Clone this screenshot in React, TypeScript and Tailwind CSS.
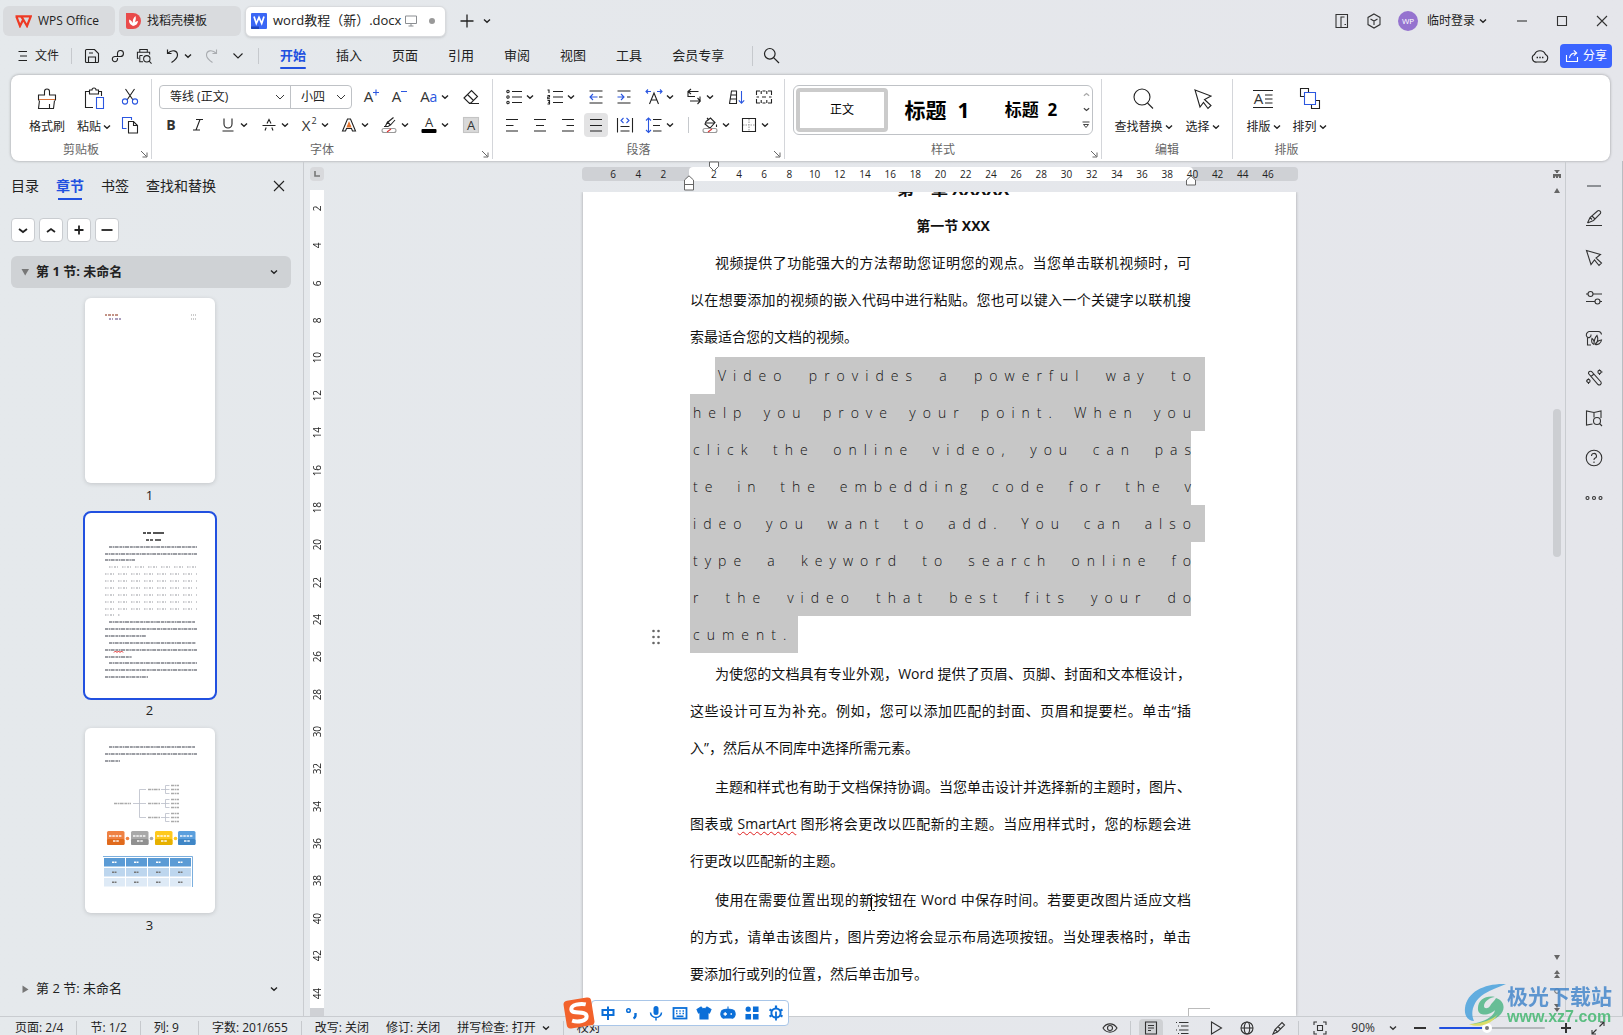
import React from "react";

type Kids = { children?: React.ReactNode };

const BLUE = "#2b57e0";

function Ic({ children, s = 18, w = 1.1, box = 18 }: Kids & { s?: number; w?: number; box?: number }) {
  return (
    <svg width={s} height={s} viewBox={`0 0 ${box} ${box}`} fill="none" stroke="currentColor" strokeWidth={w} className="shrink-0 overflow-visible" aria-hidden="true">
      {children}
    </svg>
  );
}

function Chev({ s = 8 }: { s?: number }) {
  return (
    <svg width={s} height={s} viewBox="0 0 8 8" fill="none" stroke="currentColor" strokeWidth={1.4} className="shrink-0" aria-hidden="true">
      <path d="M1 2.5 L4 5.2 L7 2.5" />
    </svg>
  );
}

function Glyph({ children, size = 15, x = 9, y = 14, fill = "#333", bold = false }: Kids & { size?: number; x?: number; y?: number; fill?: string; bold?: boolean }) {
  return (
    <text x={x} y={y} textAnchor="middle" fontSize={size} fill={fill} stroke="none" fontFamily="Open Sans, sans-serif" fontWeight={bold ? 700 : 400}>
      {children}
    </text>
  );
}

function Tool({ label, cls, chev, children }: Kids & { label: string; cls: string; chev?: boolean }) {
  return (
    <button aria-label={label} className={`flex h-6 shrink-0 items-center gap-[3px] ${cls}`}>
      {children}
      {chev && <Chev />}
    </button>
  );
}

function BigTool({ label, chev, children }: Kids & { label: string; chev?: boolean }) {
  return (
    <button className="flex flex-col items-center gap-1">
      <span className="flex h-7 items-center">{children}</span>
      <span className="flex h-5 items-center gap-0.5 text-xs leading-5">
        {label}
        {chev && <Chev />}
      </span>
    </button>
  );
}

function Launcher() {
  return (
    <button aria-label="更多设置" className="absolute right-0.5 bottom-0 text-[#666]">
      <svg width="9" height="9" viewBox="0 0 9 9" fill="none" stroke="currentColor">
        <path d="M1 1 L6.5 6.5 M7 2.5 V7 H2.5" />
      </svg>
    </button>
  );
}

function Group({ name, cls, launcher, last, children }: Kids & { name: string; cls: string; launcher?: boolean; last?: boolean }) {
  return (
    <section className={`relative mt-1 mb-0.5 flex shrink-0 flex-col ${last ? "" : "border-r border-[#d4d6da]"} ${cls}`}>
      <div className="h-[63px] pt-1.5">{children}</div>
      <div className="text-center text-xs leading-4 text-[#666]">{name}</div>
      {launcher && <Launcher />}
    </section>
  );
}

function TitleBar() {
  return (
    <header className="flex h-[42px] shrink-0 items-center justify-between pr-3.5 pl-[3px] text-xs">
      <div className="flex items-center">
        <button className="flex h-[30px] w-[112px] items-center gap-1.5 rounded-md bg-[#d9dbde] pl-3">
          <svg width="17" height="13" viewBox="0 0 17 13" fill="none" stroke="#ee3a24" strokeWidth="2.2">
            <path d="M0.5 1.3 H15.8 L12 11 L8.2 4.5 L5 11 L1.4 1.6 M6 1.3 L8.5 5" />
          </svg>
          WPS Office
        </button>
        <button className="ml-1 flex h-[30px] w-[122px] items-center gap-1.5 rounded-md bg-[#d9dbde] pl-[7px]">
          <svg width="15" height="16" viewBox="0 0 15 16">
            <path d="M0 0 H7 A8 8 0 0 1 7 16 H2 A2 2 0 0 1 0 14 Z" fill="#e94b4b" />
            <path d="M7 13 C2.5 10.5 3 8 3.3 6.5 C5 7.3 6 8.6 7 10 C6.2 7 7.5 5 9.5 3 C10.3 6 9.6 8 8.6 9.6 C9.6 8.4 10.5 8.2 12 8 C11.5 11.5 9.6 12.5 7 13 Z" fill="#fff" />
          </svg>
          找稻壳模板
        </button>
        <div className="ml-1 flex h-[31px] w-[201px] items-center rounded-md border border-[#d8dadd] bg-white pl-[5px] text-[13px] shadow-sm">
          <svg width="16" height="16" viewBox="0 0 16 16">
            <rect width="16" height="16" rx="1" fill="#3a66f5" />
            <path d="M0 13.5 H8 V16 H1 A1 1 0 0 1 0 15 Z" fill="#1d43bd" />
            <path d="M3 3.6 L5.3 10.5 L8 4.4 L10.7 10.5 L13 3.6" stroke="#fff" strokeWidth="1.7" fill="none" />
          </svg>
          <span className="ml-1.5 whitespace-nowrap">word教程（新）.docx</span>
          <svg width="12" height="12" viewBox="0 0 12 12" fill="none" stroke="#8b8e92" className="ml-1">
            <path d="M0.5 1 H11.5 V8.5 H0.5 Z M6 8.5 V11 M3.5 11 H8.5" />
          </svg>
          <span className="ml-3 size-1.5 rounded-full bg-[#999]" />
        </div>
        <button aria-label="新建" className="ml-[13px]">
          <Ic s={16} box={16} w={1.3}><path d="M8 1.5 V14.5 M1.5 8 H14.5" /></Ic>
        </button>
        <button aria-label="标签列表" className="ml-2"><Chev /></button>
      </div>
      <div className="flex items-center text-[#333]">
        <button aria-label="双窗口"><Ic s={16} box={16}><path d="M6.5 14.5 H2 V1.5 H13.5 V14.5 H7 V4 H10.5 M10.5 11.5 H12" /></Ic></button>
        <button aria-label="应用" className="ml-4"><Ic s={16} box={16}><path d="M8 1 L14 4.4 V11.6 L8 15 L2 11.6 V4.4 Z M4.5 6 L8 8 L11.5 6 M8 8 V12" /></Ic></button>
        <span className="ml-4 flex size-5 items-center justify-center rounded-full bg-[#9573cf] text-[8px] text-white">WP</span>
        <button className="ml-[9px] flex items-center gap-1 text-[#222]">临时登录<Chev /></button>
        <button aria-label="最小化" className="ml-7"><Ic s={14} box={14}><path d="M2 7 H12" /></Ic></button>
        <button aria-label="最大化" className="ml-[26px]"><Ic s={14} box={14}><path d="M2.5 2.5 H11.5 V11.5 H2.5 Z" /></Ic></button>
        <button aria-label="关闭" className="ml-[26px]"><Ic s={14} box={14}><path d="M2 2 L12 12 M12 2 L2 12" /></Ic></button>
      </div>
    </header>
  );
}

function Sep({ cls }: { cls: string }) {
  return <span className={`w-px shrink-0 bg-[#c6c9cd] ${cls}`} />;
}

const menus = ["开始", "插入", "页面", "引用", "审阅", "视图", "工具", "会员专享"];

function MenuBar() {
  return (
    <nav className="flex h-[33px] shrink-0 items-center pr-[11px] pb-1.5 pl-[17px] text-[13px]">
      <button className="flex items-center gap-1.5">
        <Ic s={12} box={12}><path d="M1.5 1.5 H10 M3 6 H10 M1.5 10.5 H10" /></Ic>
        <span className="text-xs">文件</span>
      </button>
      <Sep cls="ml-3 h-4" />
      <button aria-label="保存" className="ml-3"><Ic s={16} box={16}><path d="M4 14.5 H2.5 A1 1 0 0 1 1.5 13.5 V2.5 A1 1 0 0 1 2.5 1.5 H10.5 L14.5 5.5 V13.5 A1 1 0 0 1 13.5 14.5 H4.5 V9 H11.5 V14 M5 5 H9" /></Ic></button>
      <button aria-label="输出" className="ml-2.5"><Ic s={16} box={16}><path d="M7.5 8.5 V5 A3 3 0 1 1 10.500 8.500 H5 A2.600 2.600 0 1 0 7.500 11 V10" /></Ic></button>
      <button aria-label="打印预览" className="ml-2.5"><Ic s={16} box={17}><path d="M3 11 H1.5 V4.5 H14.5 V7 M4 4.5 V1.5 H12 V4.5 M4 8 V14.5 H7.5 M4 8 H7 M14 14 L16.5 16.5" /><circle cx="11.5" cy="11.5" r="3.4" /></Ic></button>
      <button aria-label="撤销" className="ml-3 flex items-center gap-1"><Ic s={16} box={16} w={1.2}><path d="M3.5 1.5 V5.5 H7.5 M3.5 5.5 C8 1 13.5 2.5 13.5 7 C13.5 10.5 10.5 12.5 7.5 14.5" /></Ic><Chev /></button>
      <span className="ml-3 text-[#a9acb0]"><Ic s={16} box={16}><path d="M12.5 1.5 V5.5 H8.5 M12.5 5.5 C8 1 2.5 2.5 2.5 7 C2.5 10.5 5.5 12.5 8.5 14.5" /></Ic></span>
      <button aria-label="自定义快速访问" className="ml-3"><Ic s={12} box={12}><path d="M1.5 3.5 L6 8 L10.5 3.5" /></Ic></button>
      <Sep cls="ml-3.5 h-4" />
      <div className="ml-[21px] flex gap-[30px]">
        {menus.map((m, i) => (
          <button key={m} className={i === 0 ? "relative font-bold text-[#2150e0] after:absolute after:inset-x-0 after:-bottom-1 after:h-0.5 after:rounded after:bg-[#2150e0]" : "relative"}>
            {m}
          </button>
        ))}
      </div>
      <Sep cls="ml-7 h-5" />
      <button aria-label="搜索" className="ml-2.5"><Ic s={17} box={17} w={1.2}><circle cx="6.8" cy="6.8" r="5.3" /><path d="M10.6 10.6 L16 16" /></Ic></button>
      <button aria-label="评论" className="ml-auto"><Ic s={16} box={16}><path d="M5 14 A4 4 0 0 1 2.5 6.5 C4.5 1.5 11.5 1.5 13.5 6.5 A4 4 0 0 1 11 14 Z" /><path d="M4.6 9.5 H6 M7.3 9.5 H8.7 M10 9.5 H11.4" strokeWidth={1.6} /></Ic></button>
      <button className="ml-3 flex h-6 w-[52px] items-center justify-center gap-1 rounded bg-[#3b64ff] text-xs text-white">
        <Ic s={14} box={14}><path d="M1.5 6 V12.5 H12.5 V8 M4.5 9 C5 5.5 7 4 11 4 M8.8 1.3 L11.7 4 L8.8 6.7" /></Ic>
        分享
      </button>
    </nav>
  );
}

function SelectArrow() {
  return (
    <span className="pointer-events-none absolute right-[5px]"><Ic s={10} box={10} w={0.9}><path d="M1 3 L5 7 L9 3" /></Ic></span>
  );
}

function FontRows() {
  return (
    <div className="flex flex-col gap-1">
      <div className="flex items-center pl-[7px]">
        <div className="flex h-6 items-center rounded border border-[#bfc2c6] text-xs text-[#222]">
          <label className="relative flex h-full w-[131px] items-center border-r border-[#bfc2c6]">
            <select aria-label="字体" className="w-full appearance-none bg-transparent pl-2.5 outline-none"><option>等线 (正文)</option></select>
            <SelectArrow />
          </label>
          <label className="relative flex h-full w-[60px] items-center">
            <select aria-label="字号" className="w-full appearance-none bg-transparent pl-2.5 outline-none"><option>小四</option></select>
            <SelectArrow />
          </label>
        </div>
        <Tool label="增大字号" cls="ml-2.5 w-7"><Ic><Glyph x={6.5}>A</Glyph><path stroke={BLUE} d="M14 1.5 V7.5 M11 4.5 H17" /></Ic></Tool>
        <Tool label="减小字号" cls="w-[30px]"><Ic><Glyph x={6.5}>A</Glyph><path stroke={BLUE} d="M11 3.5 H17" /></Ic></Tool>
        <Tool label="更改大小写" cls="w-[42px]" chev><Ic><Glyph x={5}>A</Glyph><Glyph x={13.5} size={14} fill={BLUE}>a</Glyph></Ic></Tool>
        <Tool label="清除格式" cls="w-5"><Ic><path d="M2 10 L9.5 2.5 L15.5 8.5 L9 15 H7 Z M5.5 6.5 L11.5 12.5 M7 15.5 H17" /></Ic></Tool>
      </div>
      <div className="flex items-center pl-2.5">
        <Tool label="加粗" cls="w-[27px]"><Ic><Glyph bold size={14}>B</Glyph></Ic></Tool>
        <Tool label="倾斜" cls="w-[30px]"><Ic><path d="M7 3.5 H14 M4 14 H11 M11 3.5 L7 14" /></Ic></Tool>
        <Tool label="下划线" cls="w-[41px]" chev><Ic><path d="M5 2.5 V8 A4 4 0 0 0 13 8 V2.5 M3.5 15 H14.5" /></Ic></Tool>
        <Tool label="删除线" cls="w-10" chev><Ic><path d="M2.5 9.5 H15.5 M5 14.5 L6.2 11.5 M13 14.5 L11.8 11.5 M7 7.5 L9 3.5 L11 7.5" /></Ic></Tool>
        <Tool label="上标" cls="w-10" chev><Ic><Glyph x={6} y={15}>X</Glyph><Glyph x={14} y={8} size={9}>2</Glyph></Ic></Tool>
        <Tool label="文字效果" cls="w-10" chev><Ic><path d="M2.5 15 L7.5 3 H10.5 L15.5 15 H12.5 L11.5 12.5 H6.5 L5.5 15 Z" /><path d="M7.2 11 L9 6.5 L10.8 11 Z" fill="#e2752f" stroke="#e2752f" /></Ic></Tool>
        <Tool label="突出显示" cls="w-10" chev><Ic><path d="M4 10.5 H8 L10.5 9 L7.5 6 L5.5 10 M8 6 L13.5 1.5 M10.5 9 L15 4" /><rect x="2" y="12.5" width="14" height="4" rx="2" stroke="#999" /><path d="M7 16 L11 13" stroke="#d33" /></Ic></Tool>
        <Tool label="字体颜色" cls="w-[42px]" chev><Ic><Glyph y={11} size={13}>A</Glyph><rect x="1.5" y="13" width="15" height="4" rx="1" fill="#000" stroke="none" /></Ic></Tool>
        <Tool label="字符底纹" cls="w-5"><Ic><rect x="1.5" y="1.5" width="15" height="15" fill="#d9d9d9" stroke="#c4c4c4" /><Glyph y={14} size={13}>A</Glyph></Ic></Tool>
      </div>
    </div>
  );
}

function ParagraphRows() {
  return (
    <div className="flex flex-col gap-1">
      <div className="flex items-center pl-3">
        <Tool label="项目符号" cls="w-[41px]" chev><Ic><path d="M7 3.5 H17 M7 9 H17 M7 14.5 H17" /><circle cx="3" cy="3.5" r="1.2" /><circle cx="3" cy="9" r="1.2" /><circle cx="3" cy="14.5" r="1.2" /></Ic></Tool>
        <Tool label="编号" cls="w-[41px]" chev><Ic><path d="M7 3.5 H17 M7 9 H17 M7 14.5 H17 M1.5 2 H3 V5 M1.5 7.5 H3.5 V9 H1.7 V10.7 H4 M1.5 12.5 H3.5 V16 H1.5 M2 14.2 H3.5" /></Ic></Tool>
        <Tool label="减少缩进" cls="w-7"><Ic><path d="M2.5 3 H15.5 M12 9 H15.5 M2.5 15 H15.5" /><path stroke={BLUE} d="M10.5 9 H3 M6 6 L3 9 L6 12" /></Ic></Tool>
        <Tool label="增加缩进" cls="w-[30px]"><Ic><path d="M2.5 3 H15.5 M12 9 H15.5 M2.5 15 H15.5" /><path stroke={BLUE} d="M2.5 9 H9 M6 6 L9 9 L6 12" /></Ic></Tool>
        <Tool label="字符缩放" cls="w-10" chev><Ic><path d="M4.5 16 L9 5 L13.5 16 M6.2 12 H11.8" /><path stroke={BLUE} d="M1 3.5 H6 M3 1.5 L1 3.5 L3 5.5 M12 3.5 H17 M15 1.5 L17 3.5 L15 5.5" /></Ic></Tool>
        <Tool label="换行" cls="w-[43px]" chev><Ic><path d="M13.5 3.5 H3 M6 1 L3 3.5 L6 6 M3 3.5 V8.5 H10 M5 13 H15 M12.5 10 L15.3 13 L12.5 16 M15 13 V8.500" /></Ic></Tool>
        <Tool label="排序" cls="w-[27px]"><Ic><path d="M1.5 15.5 L3.5 3 H8.5 V15.5 M3 7 H8.5 M2.3 11 H8.5 M1 15.5 H9" /><path stroke={BLUE} d="M13.5 3 V15 M10.8 12.3 L13.5 15.2 L16.2 12.3" /></Ic></Tool>
        <Tool label="制表位" cls="w-5"><Ic><path d="M1.5 7 V3 H5 M7.5 3 H10.5 M13 3 H16.5 V7 M1.5 11 V15 H5 M7.5 15 H10.5 M13 15 H16.5 V11 M1.5 9 H4 M7 9 H11 M14 9 H16.5 M6.2 3 V6 M11.8 3 V6 M6.2 12 V15 M11.8 12 V15" /></Ic></Tool>
      </div>
      <div className="flex items-center pl-2.5">
        <Tool label="左对齐" cls="w-7"><Ic><path d="M3 3.5 H15 M3 9.5 H10.5 M3 15 H15" /></Ic></Tool>
        <Tool label="居中对齐" cls="w-7"><Ic><path d="M3 3.5 H15 M5 9.5 H13 M3 15 H15" /></Ic></Tool>
        <Tool label="右对齐" cls="w-[25px]"><Ic><path d="M3 3.5 H15 M7.5 9.5 H15 M3 15 H15" /></Ic></Tool>
        <Tool label="两端对齐" cls="w-6 justify-center rounded bg-[#e3e3e4]"><Ic><path d="M3 3.5 H15 M3 9.5 H15 M3 15 H15" /></Ic></Tool>
        <Tool label="分散对齐" cls="ml-2 w-[29px]"><Ic><path d="M1.5 2 V16.5 M16.5 2 V16.5 M4.5 10.5 H13.5 M4.5 15 H13.5" /><path stroke={BLUE} d="M7.5 2 L5 4.5 L7.5 7 M10.5 2 L13 4.5 L10.5 7" /></Ic></Tool>
        <Tool label="行距" cls="w-[43px]" chev><Ic><path d="M8 3.5 H16.5 M8 9.5 H15 M8 15 H16.5" /><path stroke={BLUE} d="M3.5 2 V16.5 M1 4.5 L3.5 2 L6 4.5 M1 14 L3.5 16.5 L6 14" /></Ic></Tool>
        <Sep cls="mr-3 h-4" />
        <Tool label="底纹" cls="w-[39px]" chev><Ic><path d="M5 5.5 L9.5 2 L14 6.5 L9.5 11.5 H8 L4 8 Z M4 7 L13.5 7 M15.5 8.5 V11 M6 2 L8 4" /><rect x="2" y="12.5" width="14" height="4" rx="2" stroke="#999" /><path d="M7 16 L11 13" stroke="#d33" /></Ic></Tool>
        <Tool label="边框" cls="w-8" chev><Ic><path d="M2.5 2.5 H15.5 V15.5 H2.5 Z" /><path stroke="#999" strokeDasharray="1.5 1" d="M9 3 V15 M3 9 H15" /></Ic></Tool>
      </div>
    </div>
  );
}

function Ribbon() {
  return (
    <div className="mr-[13px] ml-[11px] flex h-[86px] shrink-0 overflow-hidden rounded-lg bg-white text-[#222] shadow-[0_0_3px_rgba(0,0,0,0.35)]">
      <Group name="剪贴板" cls="w-[141px]" launcher>
        <div className="flex pl-[18px]">
          <BigTool label="格式刷"><Ic s={24} box={24}><path d="M3.5 13.5 V8 H9.5 V4.5 A2.5 2.5 0 0 1 14.5 4.5 V8 H20.5 V13.5 M4.5 13.5 L3.5 21.5 H18.5 L19.5 13.5 M14.5 21.5 V17" /><path stroke="#d8743a" d="M4 12.5 H20" /></Ic></BigTool>
          <div className="ml-3"><BigTool label="粘贴" chev><Ic s={24} box={24}><path d="M11 20.5 H3.5 V4.5 H7.5 M16.5 4.5 H19.5 V9 M7.5 7 V3 H10 A2 2 0 0 1 14 3 H16.5 V7 Z" /><path stroke={BLUE} d="M14.5 10.5 H21.5 V21.5 H14.5 Z" /></Ic></BigTool></div>
          <div className="ml-2.5 flex flex-col gap-1">
            <Tool label="剪切" cls="w-5"><Ic><path d="M4.5 1 L12 12 M13.5 1 L6 12" /><circle cx="4" cy="13.5" r="2.6" stroke={BLUE} /><circle cx="14" cy="13.5" r="2.6" stroke={BLUE} /></Ic></Tool>
            <Tool label="复制" cls="w-5"><Ic><path stroke={BLUE} d="M5.5 12.5 H1.5 V1.5 H10.5 V4" /><path d="M7.5 5.5 H12.5 L16.5 9.5 V17 H7.5 Z M12.5 5.5 V9.5 H16.5" /></Ic></Tool>
          </div>
        </div>
      </Group>
      <Group name="字体" cls="w-[341px]" launcher><FontRows /></Group>
      <Group name="段落" cls="w-[292px]" launcher><ParagraphRows /></Group>
      <Group name="样式" cls="w-[317px]" launcher>
        <div className="mr-2 ml-2 flex h-[50px] items-center rounded-md border border-[#bfc2c6] pl-0.5 text-black">
          <button className="h-[44px] w-[92px] shrink-0 rounded border-4 border-[#cbcbcb] text-xs">正文</button>
          <button className="w-[98px] shrink-0 text-[21px] leading-7 font-bold">标题&nbsp; 1</button>
          <button className="w-[90px] shrink-0 text-[17px] leading-7 font-bold">标题&nbsp; 2</button>
          <div className="flex flex-1 flex-col items-center gap-2 pl-1 text-[#444]">
            <button aria-label="上一行" className="rotate-180 text-[#aaa]"><Chev s={7} /></button>
            <button aria-label="下一行"><Chev s={7} /></button>
            <button aria-label="展开"><svg width="8" height="8" viewBox="0 0 8 8" fill="none" stroke="currentColor"><path d="M0.5 1 H7.5 M1.5 3.5 L4 6.5 L6.5 3.5 Z" /></svg></button>
          </div>
        </div>
      </Group>
      <Group name="编辑" cls="w-[131px]">
        <div className="flex justify-center gap-[13px]">
          <BigTool label="查找替换" chev><Ic s={24} box={24}><circle cx="11" cy="10" r="8" /><path d="M16.5 16 L22 21.5" /></Ic></BigTool>
          <BigTool label="选择" chev><Ic s={24} box={24}><path d="M4 3 L20 9 L13.5 12.5 L20 18.5 L17 21.5 L12.5 15.5 L9 20 Z" /></Ic></BigTool>
        </div>
      </Group>
      <Group name="排版" cls="w-[107px]" last>
        <div className="flex justify-center gap-3">
          <BigTool label="排版" chev><Ic s={24} box={24}><path d="M2 3.5 H22 M2 20.5 H22 M14 8 H21.5 M14 12 H21.5 M14 16 H21.5" /><Glyph x={7.5} y={17}>A</Glyph></Ic></BigTool>
          <BigTool label="排列" chev><Ic s={24} box={24}><path d="M6 9.5 H2.5 V1.5 H10.5 V5 M17.5 13.5 H21.5 V21.5 H13.5 V17.5" /><path stroke={BLUE} d="M6.5 5.5 H17.5 V17.5 H6.5 Z" /></Ic></BigTool>
        </div>
      </Group>
    </div>
  );
}

/* Dashed strokes stand for the lines of text on a miniature page. */
function TextLine({ x1, x2, y, c = "#9c9ea4", d = "3 0.6 1.5 0.5 4 0.8", w = 2 }: { x1: number; x2: number; y: number; c?: string; d?: string; w?: number }) {
  return <path d={`M${x1} ${y} H${x2}`} stroke={c} strokeWidth={w} strokeDasharray={d} fill="none" />;
}

const thumb2Body: [number, number, number][] = [
  [24, 112, 34], [20, 112, 41], [20, 50, 47],
  [24, 110, 109], [20, 112, 116], [20, 61, 123],
  [24, 111, 130], [20, 112, 137], [20, 47, 144],
  [24, 112, 150], [20, 112, 157], [20, 63, 164],
];
const thumb2Light: [number, number, number][] = [
  [24, 112, 54], [20, 112, 61], [20, 112, 68], [20, 112, 75], [20, 112, 82], [20, 112, 89], [20, 112, 96], [20, 35, 102],
];

function Thumb1() {
  return (
    <svg width="130" height="185" viewBox="0 0 130 185">
      <TextLine x1={20} x2={34} y={17} c="#b0705f" d="2 1 3 1" w={1.5} />
      <TextLine x1={24} x2={36} y={21} c="#8f7fa8" d="2 1 1 2 3 1" w={1.5} />
      <TextLine x1={106} x2={111} y={17} c="#bbb" d="1 1" w={1.5} />
      <TextLine x1={106} x2={111} y={21} c="#bbb" d="1 1" w={1.5} />
    </svg>
  );
}

function Thumb2() {
  return (
    <svg width="130" height="185" viewBox="0 0 130 185">
      <TextLine x1={58} x2={79} y={20} c="#555" d="3 1 4 2 12 1" />
      <TextLine x1={61} x2={76} y={27} c="#666" d="3 1 3 2 7 1" />
      {thumb2Body.map(([a, b, y]) => <TextLine key={y} x1={a} x2={b} y={y} />)}
      {thumb2Light.map(([a, b, y]) => <TextLine key={y} x1={a} x2={b} y={y} c="#bcbdc1" d="1.5 1 1 1.5 2 1 1 4" w={1.6} />)}
      <path d="M29 139.5 l1.5 -1.5 l1.5 1.5 l1.5 -1.5 l1.5 1.5 l1.5 -1.5 l1.5 1.5" stroke="#e02020" fill="none" />
    </svg>
  );
}

const steps: [number, string, string][] = [[22, "#ef8143", "#e06a1c"], [46, "#a9a9a9", "#909090"], [70, "#ffc91c", "#e6b000"], [93, "#5b9fdd", "#3f86c6"]];

function Thumb3() {
  return (
    <svg width="130" height="185" viewBox="0 0 130 185">
      <TextLine x1={24} x2={110} y={19} />
      <TextLine x1={20} x2={112} y={26} />
      <TextLine x1={20} x2={35} y={33} />
      <g stroke="#b9bcc8" fill="none" strokeWidth="0.8">
        <path d="M48 75.5 H54.5 M61 61.5 H54.5 V89.5 H61 M54.5 75.5 H61" />
        {[61.5, 75.5, 89.5].map((y) => (
          <path key={y} d={`M76 ${y} H80.5 M84.5 ${y - 4} H80.5 V${y + 4} H84.5 M80.5 ${y} H84.5`} />
        ))}
      </g>
      <TextLine x1={29} x2={46} y={75.5} c="#aaa" w={1.5} />
      {[61.5, 75.5, 89.5].map((y) => (
        <g key={y}>
          <TextLine x1={63} x2={75} y={y} c="#aaa" w={1.5} />
          {[-4, 0, 4].map((o) => <TextLine key={o} x1={86} x2={94} y={y + o} c="#aaa" w={1.5} />)}
        </g>
      ))}
      {steps.map(([x, a, b], i) => (
        <g key={x}>
          <rect x={x} y="103" width="17.5" height="14" rx="1.5" fill={a} />
          <rect x={x} y="111" width="17.5" height="6" rx="1.5" fill={b} />
          <path d={`M${x + 2} 108 H${x + 15} M${x + 6} 113 H${x + 12}`} stroke="#fff" strokeOpacity="0.7" strokeWidth="1.8" strokeDasharray="2.5 0.8" />
          {i < 3 && <circle cx={x + 20.5} cy="110.5" r="1.8" fill={a} />}
        </g>
      ))}
      <path d="M18 128.5 H107.5 V159" stroke="#5b9bd5" fill="none" strokeWidth="0.8" />
      {[0, 1, 2].map((r) =>
        [0, 1, 2, 3].map((c) => (
          <g key={`${r}-${c}`}>
            <rect x={19 + c * 22} y={130 + r * 10} width="21" height="8.5" fill={r === 0 ? "#5b9bd5" : r === 1 ? "#bdd6ee" : "#deeaf6"} />
            <path d={`M${27 + c * 22} ${134.3 + r * 10} h5`} stroke={r === 0 ? "#fff" : "#777"} strokeWidth="1.5" strokeDasharray="2 0.5" />
          </g>
        ))
      )}
    </svg>
  );
}

function Thumb({ n, active, children }: Kids & { n: number; active?: boolean }) {
  return (
    <button className="flex w-[134px] flex-col items-center text-[13px]">
      <span className={`block overflow-hidden rounded-lg border-2 bg-white ${active ? "border-[#2150e0]" : "border-transparent bg-clip-padding drop-shadow-sm"}`}>{children}</span>
      <span className="block h-[26px] leading-[20px]">{n}</span>
    </button>
  );
}

function Sidebar() {
  return (
    <aside className="flex w-[304px] shrink-0 flex-col border-r border-[#c9ccd0] text-[#222]">
      <div className="mt-[9px] flex h-8 items-center gap-[17px] pl-[11px] text-sm">
        <button>目录</button>
        <button className="relative font-bold text-[#2150e0] after:absolute after:inset-x-0.5 after:-bottom-1 after:h-0.5 after:bg-[#2150e0]">章节</button>
        <button>书签</button>
        <button>查找和替换</button>
        <button aria-label="关闭窗格" className="mr-[18px] ml-auto"><Ic s={12} box={12}><path d="M1 1 L11 11 M11 1 L1 11" /></Ic></button>
      </div>
      <div className="mt-4 flex gap-1 pl-[11px]">
        {["M3 6 L7 9 L11 6", "M3 9 L7 6 L11 9", "M7 2.5 V11.5 M2.5 7 H11.5", "M1.5 7 H12.5"].map((d, i) => (
          <button key={d} aria-label={["下移", "上移", "新增", "删除"][i]} className="flex size-6 items-center justify-center rounded border border-[#c9ccd0] bg-white">
            <Ic s={14} box={14} w={1.8}><path d={d} /></Ic>
          </button>
        ))}
      </div>
      <button className="mt-3.5 mr-3 ml-[11px] flex h-8 items-center rounded-md bg-[#cfd2d5] pr-[13px] pl-2.5 text-[13px] font-bold">
        <svg width="9" height="8" viewBox="0 0 9 8"><path d="M0.5 1 H8 L4.2 7.5 Z" fill="#777" /></svg>
        <span className="ml-1.5">第 1 节: 未命名</span>
        <span className="ml-auto"><Chev /></span>
      </button>
      <div className="mt-2 flex flex-col items-center pr-1">
        <Thumb n={1}><Thumb1 /></Thumb>
        <Thumb n={2} active><Thumb2 /></Thumb>
        <Thumb n={3}><Thumb3 /></Thumb>
      </div>
      <button className="mt-auto mr-3 mb-[11px] ml-[11px] flex h-8 items-center pr-[13px] pl-2.5 text-[13px]">
        <svg width="9" height="9" viewBox="0 0 9 9"><path d="M1.5 0.5 L7.5 4.5 L1.5 8 Z" fill="#777" /></svg>
        <span className="ml-1.5">第 2 节: 未命名</span>
        <span className="ml-auto"><Chev /></span>
      </button>
    </aside>
  );
}

const vNums = Array.from({ length: 22 }, (_, i) => (i + 1) * 2);
const hNums: (number | null)[] = [6, 4, 2, null, ...Array.from({ length: 23 }, (_, i) => (i + 1) * 2)];

function VerticalRuler() {
  return (
    <div className="mr-0.5 ml-1.5 flex w-3.5 shrink-0 flex-col">
      <div className="mt-1.5 flex h-3.5 items-center justify-center rounded-sm bg-[#d8d9dc]">
        <svg width="6" height="6" viewBox="0 0 6 6" fill="none" stroke="#777" strokeWidth="1.6"><path d="M1 0 V5 H6" /></svg>
      </div>
      <div className="mt-[9px] flex min-h-0 flex-1 flex-col bg-linear-to-t from-[#cfd1d5] from-[8px] to-white to-[8px] pb-1 text-[10px] leading-none text-[#222]">
        {vNums.map((n) => (
          <span key={n} className="flex min-h-0 flex-1 rotate-180 items-center justify-center [writing-mode:vertical-rl]">{n}</span>
        ))}
      </div>
    </div>
  );
}

function HorizontalRuler() {
  return (
    <div className="relative mt-1.5 grid h-3.5 w-[716px] grid-cols-1 text-[10px] leading-[14px] text-[#222]">
      <div className="col-start-1 row-start-1 overflow-hidden rounded bg-[#cfd1d5] pr-[105px] pl-[107px]"><div className="h-full rounded-sm bg-white" /></div>
      <div className="col-start-1 row-start-1 flex pr-[17px] pl-[19px]">
        {hNums.map((n, i) => <span key={i} className="flex-1 text-center">{n}</span>)}
      </div>
      <svg width="10" height="11" viewBox="0 0 10 11" className="absolute -top-1.5 left-[127px]" fill="#fff" stroke="#666"><path d="M0.5 1 H9.5 V5.5 L5 10 L0.5 5.5 Z" /></svg>
      <svg width="10" height="16" viewBox="0 0 10 16" className="absolute top-2 left-[102px]" fill="#fff" stroke="#666"><path d="M0.5 15 V5 L5 0.8 L9.5 5 V15 Z M0.5 9.5 H9.5" /></svg>
      <svg width="10" height="11" viewBox="0 0 10 11" className="absolute top-2 right-[102px]" fill="#fff" stroke="#666"><path d="M0.5 10 V5 L5 0.8 L9.5 5 V10 Z" /></svg>
    </div>
  );
}

function Para({ lines }: { lines: React.ReactNode[] }) {
  return (
    <p>
      {lines.map((l, i) => (
        <span key={i} className={`block whitespace-nowrap ${i === 0 ? "pl-[25px]" : ""} ${i < lines.length - 1 ? "[text-align-last:justify]" : ""}`}>{l}</span>
      ))}
    </p>
  );
}

const selected: [string, string][] = [
  ["Video provides a powerful way to", "ml-[25px] -mr-3.5 pr-[7px]"],
  ["help you prove your point. When you", "-mr-3.5 pr-[7px]"],
  ["click the online video, you can pas", ""],
  ["te in the embedding code for the v", ""],
  ["ideo you want to add. You can also", "-mr-3.5 pr-[7px]"],
  ["type a keyword to search online fo", ""],
  ["r the video that best fits your do", ""],
];

function Page() {
  return (
    <article className="relative h-full w-[713px] overflow-hidden bg-white pr-[105px] pl-[107px] text-sm leading-[37px] text-[#111] shadow-[0_0_3px_rgba(0,0,0,0.3)]">
      <h1 className="-mt-[22px] pl-[25px] text-center text-[17px] leading-[37px] font-bold">第一章 XXXXX</h1>
      <h2 className="pl-[25px] text-center text-sm leading-[37px] font-bold">第一节 XXX</h2>
      <div className="flex flex-col gap-0.5">
        <Para lines={["视频提供了功能强大的方法帮助您证明您的观点。当您单击联机视频时，可", "以在想要添加的视频的嵌入代码中进行粘贴。您也可以键入一个关键字以联机搜", "索最适合您的文档的视频。"]} />
        <div className="relative font-light">
          {selected.map(([t, c]) => (
            <div key={t} className={`bg-[#c7c7c7] pl-[3px] ${c}`}>
              <div className={`tracking-[7px] whitespace-nowrap [text-align-last:justify] ${c ? "" : "-mr-[7px]"}`}>{t}</div>
            </div>
          ))}
          <div className="w-[108px] bg-[#c7c7c7] pl-[3px] tracking-[7px]">cument.</div>
          <svg width="8" height="16" viewBox="0 0 8 16" fill="#666" className="absolute bottom-2 -left-[38px]">
            {[2, 8, 14].map((y) => <g key={y}><circle cx="1.5" cy={y} r="1.3" /><circle cx="6.5" cy={y} r="1.3" /></g>)}
          </svg>
        </div>
        <Para lines={["为使您的文档具有专业外观，Word 提供了页眉、页脚、封面和文本框设计，", "这些设计可互为补充。例如，您可以添加匹配的封面、页眉和提要栏。单击“插", "入”，然后从不同库中选择所需元素。"]} />
        <Para lines={["主题和样式也有助于文档保持协调。当您单击设计并选择新的主题时，图片、", <>图表或 <span className="underline decoration-[#e02020] decoration-wavy decoration-1 underline-offset-2">SmartArt</span> 图形将会更改以匹配新的主题。当应用样式时，您的标题会进</>, "行更改以匹配新的主题。"]} />
        <Para lines={["使用在需要位置出现的新按钮在 Word 中保存时间。若要更改图片适应文档", "的方式，请单击该图片，图片旁边将会显示布局选项按钮。当处理表格时，单击", "要添加行或列的位置，然后单击加号。"]} />
      </div>
      <span className="absolute right-[86px] bottom-0 h-2 w-[22px] border-t border-l border-[#bbb]" />
      <svg width="9" height="18" viewBox="0 0 9 18" className="absolute top-[702px] left-[284px]" fill="none" stroke="#000"><path d="M1 1.5 H3.5 L4.5 2.5 L5.5 1.5 H8 M4.5 2.5 V15.5 M1 16.5 H3.5 L4.5 15.5 L5.5 16.5 H8" /></svg>
    </article>
  );
}

function ScrollColumn() {
  return (
    <div className="flex w-[13px] shrink-0 flex-col items-center border-r border-[#c9ccd0] pr-1 text-[#666]">
      <svg width="8" height="8" viewBox="0 0 8 8" className="mt-[9px]" fill="currentColor"><path d="M1 0 H7 L5 2 V3 H3 V2 Z M0 4 H8 V8 H6 V6.500 H5 V8 H3 V6.500 H2 V8 H0 Z" /></svg>
      <svg width="6" height="5" viewBox="0 0 6 5" className="mt-2.5" fill="currentColor"><path d="M3 0 L6 5 H0 Z" /></svg>
      <div className="mt-[216px] h-[148px] w-2 rounded-full bg-[#ccced2]" />
      <div className="mt-auto mb-1 flex flex-col items-center gap-2.5">
        <svg width="6" height="5" viewBox="0 0 6 5" fill="currentColor"><path d="M3 5 L6 0 H0 Z" /></svg>
        <svg width="6" height="8" viewBox="0 0 6 8" fill="currentColor"><path d="M3 0 L6 4 H0 Z M3 4 L6 8 H0 Z" /></svg>
        <svg width="6" height="6" viewBox="0 0 6 6" fill="none" stroke="currentColor"><circle cx="3" cy="3" r="2.3" /></svg>
        <svg width="6" height="8" viewBox="0 0 6 8" fill="currentColor"><path d="M3 4 L6 0 H0 Z M3 8 L6 4 H0 Z" /></svg>
      </div>
    </div>
  );
}

const rail: [string, React.ReactNode][] = [
  ["样式", <path d="M1 16.5 H17 M2.5 14 L5 8.5 L12.5 2 C14 0.8 16.5 2.5 15.5 4.5 L8.5 11.5 L2.5 14 M7 7 L10 10 M5 8.5 L7 10.5" />],
  ["选择", <path d="M1.5 1.5 L15.5 5.5 L11 9 L16.5 14 L14 16.5 L9.5 11 L6 15.5 Z" />],
  ["属性", <><circle cx="5.5" cy="5" r="2.5" /><circle cx="12.5" cy="12.5" r="2.5" /><path d="M1 5 H3 M8 5 H17 M1 12.5 H10 M15 12.5 H17" /></>],
  ["稻壳", <path d="M2.5 9 V16 H6 M2 8 A3.5 3.5 0 0 1 4 2.5 H13.5 A3.5 3.5 0 0 1 16.5 5.5 M2 8 A2.5 2.5 0 0 0 6 5.5 M9 15.5 C6 14 6.5 11 7 9.5 C9 11 9.5 13 9 15.5 C9 11 10 8.5 12 6.5 C13.5 10 12.5 13.5 10 15.5 C11.5 12.5 13.5 11.5 16.5 11 C16 14.5 13 16 10 15.5" />],
  ["美化", <><path d="M3.5 4.5 A2 2 0 0 1 6.5 2.5 L16 13 A2 2 0 0 1 13 15.5 Z M6 7.5 L9 5" /><circle cx="14.5" cy="3" r="1.6" /><circle cx="3.5" cy="12" r="1.6" /><path d="M14.5 0.5 V1.5 M14.5 4.5 V6 M17.5 3 H16 M3.5 9.5 V10.5 M3.5 13.5 V15 M1 12 H2" /></>],
  ["查阅", <><path d="M7.5 15 L1.5 16 V2 L9 3.5 L16 2 V9 M9 3.5 V8.5" /><circle cx="12" cy="12" r="3.5" /><path d="M14.5 14.5 L17 17" /></>],
  ["帮助", <><circle cx="9" cy="9" r="7.8" /><path d="M6.5 7 A2.5 2.5 0 1 1 9.8 9.3 Q9 9.7 9 11 M9 12.5 V14" /></>],
  ["更多", <><circle cx="2.5" cy="9" r="1.5" /><circle cx="9" cy="9" r="1.5" /><circle cx="15.5" cy="9" r="1.5" /></>],
];

function RightRail() {
  return (
    <aside className="flex w-[57px] shrink-0 flex-col items-center gap-[22px] border-r border-[#b9bdc2] pt-6 text-[#333]">
      <button aria-label="收起" className="h-0.5 w-3.5 bg-[#8d9095]" />
      {rail.map(([name, art]) => (
        <button key={name} aria-label={name}><Ic>{art}</Ic></button>
      ))}
    </aside>
  );
}

function Watermark() {
  return (
    <div className="pointer-events-none absolute right-[11px] bottom-2 flex items-center opacity-85">
      <svg width="43" height="44" viewBox="0 0 43 44">
        <path d="M42 1 C22 0 3 8 1 25 C0 34 5 38 10 38 C6 30 9 18 20 11 C27 6.5 35 4 42 1 Z" fill="#4ba3dd" />
        <path d="M14 27 C13 17 22 12 31 14 C27 14 20 18 20 23 C20 26 24 26 26 23 C27 20 31 18 32 15 C41 18 42 27 35 33 C27 40 12 42 6 41 C18 40 30 34 31 27 C27 32 15 34 14 27 Z" fill="#52b788" />
        <path d="M5 41 C14 41 28 38 34 31 C27 43 13 45 5 41 Z" fill="#d9dc52" />
      </svg>
      <div className="flex flex-col">
        <span className="text-[21px] leading-[24px] font-bold text-[#4687cb]">极光下载站</span>
        <span className="font-['Liberation_Sans',sans-serif] text-base leading-[18px] font-bold text-[#45b872]">www.xz7.com</span>
      </div>
    </div>
  );
}

const ime: [string, React.ReactNode][] = [
  ["中文", <path strokeWidth="2" d="M2.5 5 H13.5 V10 H2.5 Z M8 1.5 V15" />],
  ["标点", <><circle cx="4.5" cy="5.5" r="1.8" strokeWidth="1.5" /><path strokeWidth="2.4" d="M11.5 8 V10.5 C11.5 12 10.5 13 9.5 13.5" /></>],
  ["语音", <><rect x="5.5" y="1" width="5" height="9" rx="2.5" fill="#0b6fd8" stroke="none" /><path strokeWidth="1.5" d="M2.5 7.5 A5.5 5 0 0 0 13.5 7.5 M8 12.5 V15.5" /></>],
  ["键盘", <><rect x="1.5" y="3" width="13" height="10.5" strokeWidth="1.8" /><path strokeWidth="1.6" d="M4 6 H5.5 M7.3 6 H8.7 M10.5 6 H12 M4 8.5 H5.5 M7.3 8.5 H8.7 M10.5 8.5 H12 M4.5 11.2 H11.5" /></>],
  ["皮肤", <path fill="#0b6fd8" d="M5 2 C6 4 10 4 11 2 L15 4.5 L13.5 8 L12 7.3 V14 H4 V7.3 L2.5 8 L1 4.5 Z" />],
  ["游戏", <><path fill="#0b6fd8" d="M2 5.5 C5 3.5 11 3.5 14 5.5 C16.5 9 14.5 14 11.5 13 H4.5 C1.5 14 -0.5 9 2 5.5 Z M8 4.5 V1.5" /><path stroke="#fff" d="M3.5 9 H7 M5.2 7.3 V10.7 M10.5 9 H12" strokeWidth="1.4" /></>],
  ["工具箱", <><path fill="#0b6fd8" d="M2 9.5 H6.5 V14 H2 Z M9.5 9.5 H14 V14 H9.5 Z M9.5 2 H14 V6.5 H9.5 Z" /><circle cx="4.2" cy="4.2" r="2.6" fill="#0b6fd8" stroke="none" /></>],
  ["设置", <><circle cx="8" cy="8" r="4.6" strokeWidth="2" /><path strokeWidth="2.2" d="M8 0.5 V3 M1.5 4.5 L3.5 5.5 M14.5 4.5 L12.5 5.5 M1.5 11.5 L3.5 10.5 M14.5 11.5 L12.5 10.5" /><path strokeWidth="1.8" d="M8 6.5 V15.5" /></>],
];

function ImeBar() {
  return (
    <div className="absolute bottom-1.5 left-[563px] flex items-center">
      <svg width="32" height="32" viewBox="0 0 32 32" className="relative z-10">
        <g transform="rotate(-9 16 16)">
          <rect x="2" y="2" width="28" height="28" rx="4" fill="#f2622b" />
          <path d="M24 8.5 C19 6.5 9 6.5 9 11.5 C9 17 23 14 23 20 C23 25.5 13 25 8 22.5" stroke="#fff" strokeWidth="4" fill="none" />
        </g>
      </svg>
      <div className="-ml-1 flex h-[26px] items-center gap-2 rounded-sm border border-[#a9c6e8] bg-white pr-1 pl-2 text-[#0b6fd8]">
        {ime.map(([name, art]) => (
          <button key={name} aria-label={name}><Ic s={16} box={16}>{art}</Ic></button>
        ))}
      </div>
    </div>
  );
}

function StatusBar() {
  return (
    <footer className="flex h-[19px] shrink-0 items-center justify-between border-t border-[#c9ccd0] pt-[3px] pr-[18px] pl-[15px] text-xs leading-4 whitespace-nowrap text-[#222]">
      <div className="flex items-center gap-[13px]">
        <span>页面: 2/4</span>
        <Sep cls="h-3.5" />
        <span>节: 1/2</span>
        <Sep cls="h-3.5" />
        <span className="mr-1.5">列: 9</span>
        <Sep cls="h-3.5" />
        <span>字数: 201/655</span>
        <Sep cls="h-3.5" />
        <span>改写: 关闭</span>
        <span className="ml-1">修订: 关闭</span>
        <button className="ml-1 flex items-center gap-1.5">拼写检查: 打开<Chev /></button>
        <Sep cls="h-3.5" />
        <span>校对</span>
      </div>
      <div className="flex items-center text-[#333]">
        <button aria-label="护眼"><Ic s={16} box={16}><path d="M1 8 C4.5 2.5 11.5 2.5 15 8 C11.5 13.5 4.5 13.5 1 8 Z" /><circle cx="8" cy="8" r="2.5" /></Ic></button>
        <Sep cls="ml-3 h-3.5" />
        <button aria-label="页面视图" className="ml-2 flex h-[18px] w-6 items-center justify-center rounded-t bg-[#cfd1d4]"><Ic s={14} box={14}><path d="M1.5 1 H12.5 V13 H1.5 Z M4 4.5 H10 M4 7 H10 M4 9.5 H7" /></Ic></button>
        <button aria-label="大纲" className="ml-3"><Ic s={14} box={14}><path d="M4 1.5 H13.5 M6 5 H13.5 M4 9 H13.5 M6 12.5 H13.5 M1 1.5 H2 M3 5 H4 M1 9 H2 M3 12.5 H4" /></Ic></button>
        <button aria-label="阅读" className="ml-5"><Ic s={14} box={14}><path d="M2.5 1 L12.5 7 L2.5 13 Z" /></Ic></button>
        <button aria-label="网页" className="ml-[17px]"><Ic s={14} box={14}><circle cx="7" cy="7" r="6" /><ellipse cx="7" cy="7" rx="2.7" ry="6" /><path d="M1 7 H13" /></Ic></button>
        <button aria-label="书写" className="ml-[18px]"><Ic s={14} box={14}><path d="M1 13 L3 8.5 L10 1.5 L12.5 4 L5.5 11 Z M6 5.5 L8.5 8 M3 8.5 L5.5 11" /></Ic></button>
        <Sep cls="ml-3 h-3.5" />
        <button aria-label="适应" className="ml-3.5"><Ic s={14} box={14}><path d="M1 4 V1 H4 M10 1 H13 V4 M13 10 V13 H10 M4 13 H1 V10 M4.5 4.5 H9.5 V9.5 H4.5 Z" /></Ic></button>
        <button className="ml-6 flex items-center gap-3.5">90%<Chev /></button>
        <button aria-label="缩小" className="ml-4"><Ic s={14} box={14} w={2}><path d="M1 7 H13" /></Ic></button>
        <input
          type="range"
          aria-label="缩放"
          min={0}
          max={100}
          defaultValue={45}
          className="ml-3 h-0.5 w-[106px] appearance-none rounded bg-linear-to-r from-[#2150e0] from-45% to-[#b5b8bc] to-45% [&::-webkit-slider-thumb]:size-2.5 [&::-webkit-slider-thumb]:appearance-none [&::-webkit-slider-thumb]:rounded-full [&::-webkit-slider-thumb]:border-[3px] [&::-webkit-slider-thumb]:border-white [&::-webkit-slider-thumb]:bg-[#777]"
        />
        <button aria-label="放大" className="ml-3.5"><Ic s={14} box={14} w={2}><path d="M2 7 H12 M7 2 V12" /></Ic></button>
        <button aria-label="全屏" className="ml-[18px]"><Ic s={14} box={14}><path d="M8.5 5.5 L13 1 M9 1 H13 V5 M5.5 8.5 L1 13 M1 9 V13 H5" /></Ic></button>
      </div>
    </footer>
  );
}

export default function App() {
  return (
    <div className="relative flex h-screen flex-col overflow-hidden bg-linear-to-r from-[#e5e9ec] to-[#e5e6eb] font-['Open_Sans','Noto_Sans_CJK_SC',sans-serif] text-[#222]" lang="zh-CN">
      <TitleBar />
      <MenuBar />
      <Ribbon />
      <div className="flex min-h-0 flex-1">
        <Sidebar />
        <VerticalRuler />
        <main className="flex min-w-0 flex-1 flex-col items-center">
          <HorizontalRuler />
          <div className="mt-[11px] flex min-h-0 w-full flex-1 justify-center overflow-hidden"><Page /></div>
        </main>
        <ScrollColumn />
        <RightRail />
      </div>
      <StatusBar />
      <ImeBar />
      <Watermark />
    </div>
  );
}
